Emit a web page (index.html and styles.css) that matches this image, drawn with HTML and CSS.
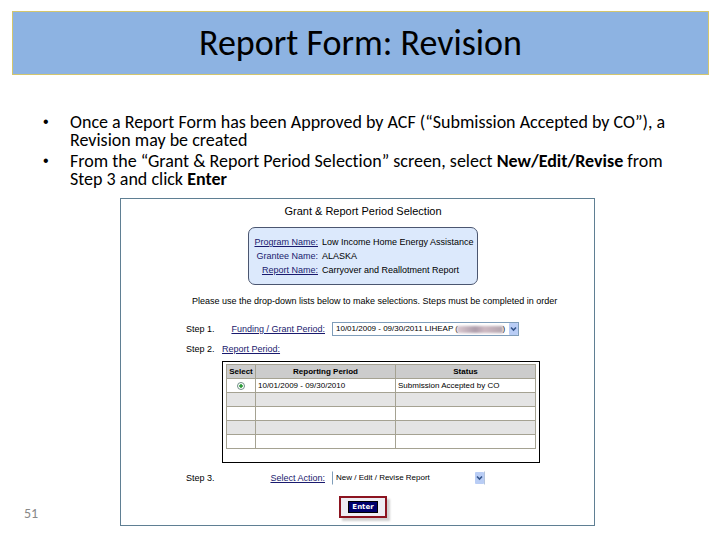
FILE: index.html
```
<!DOCTYPE html>
<html lang="en">
<head>
  <meta charset="utf-8">
  <title>Report Form: Revision</title>
  <link rel="stylesheet" href="styles.css">
</head>
<body>
  <header class="banner">
    <h1>Report Form: Revision</h1>
  </header>

  <ul class="points">
    <li>Once a Report Form has been Approved by ACF (“Submission Accepted by CO”), a Revision may be created</li>
    <li>From the “Grant &amp; Report Period Selection” screen, select <b>New/Edit/Revise</b> from Step 3 and click <b>Enter</b></li>
  </ul>

  <main class="content">
    <span class="slide-number">51</span>

    <form class="screen">
      <h2>Grant &amp; Report Period Selection</h2>

      <dl class="info">
        <dt><a href="#">Program Name:</a></dt>
        <dd>Low Income Home Energy Assistance</dd>
        <dt><a href="#" class="plain">Grantee Name:</a></dt>
        <dd>ALASKA</dd>
        <dt><a href="#">Report Name:</a></dt>
        <dd>Carryover and Reallotment Report</dd>
      </dl>

      <p class="hint">Please use the drop-down lists below to make selections. Steps must be completed in order</p>

      <div class="step">
        <span>Step 1.</span>
        <label for="grant"><a href="#">Funding / Grant Period:</a></label>
        <div class="select grant">
          <select id="grant">
            <option>10/01/2009 - 09/30/2011 LIHEAP ( &nbsp; &nbsp; &nbsp; &nbsp; &nbsp; &nbsp; &nbsp; &nbsp; &nbsp; &nbsp;)</option>
          </select>
          <span class="redacted"></span>
          <svg class="arrow" viewBox="0 0 9 12"><rect width="9" height="12" rx="1" fill="#b9cdf5"/><path d="M2 4.5 4.5 7 7 4.5" fill="none" stroke="#34558b" stroke-width="1.6"/></svg>
        </div>
      </div>

      <div class="step">
        <span>Step 2.</span>
        <a href="#">Report Period:</a>
      </div>

      <div class="table-box">
        <table>
          <thead>
            <tr><th class="col-select">Select</th><th>Reporting Period</th><th>Status</th></tr>
          </thead>
          <tbody>
            <tr>
              <td class="col-select"><input type="radio" name="period" aria-label="10/01/2009 - 09/30/2010" checked></td>
              <td>10/01/2009 - 09/30/2010</td>
              <td>Submission Accepted by CO</td>
            </tr>
            <tr><td></td><td></td><td></td></tr>
            <tr><td></td><td></td><td></td></tr>
            <tr><td></td><td></td><td></td></tr>
            <tr><td></td><td></td><td></td></tr>
          </tbody>
        </table>
      </div>

      <div class="step">
        <span>Step 3.</span>
        <label for="action"><a href="#">Select Action:</a></label>
        <div class="select action">
          <select id="action">
            <option>New / Edit / Revise Report</option>
          </select>
          <svg class="arrow" viewBox="0 0 9 12"><rect width="9" height="12" rx="1" fill="#b9cdf5"/><path d="M2 4.5 4.5 7 7 4.5" fill="none" stroke="#34558b" stroke-width="1.6"/></svg>
        </div>
      </div>

      <div class="highlight">
        <button type="button">Enter</button>
      </div>
    </form>
  </main>
</body>
</html>
```
FILE: styles.css
```
* {
  margin: 0;
  padding: 0;
  box-sizing: border-box;
}

body {
  font-family: Carlito, Calibri, Lato, sans-serif;
  font-variant-ligatures: none;
  background: #fff;
  color: #000;
}

.banner {
  margin: 11px 11px 0 12px;
  height: 64px;
  display: flex;
  align-items: center;
  justify-content: center;
  background: #8db3e2;
  border: 1px solid #d3c66e;
}

.banner h1 {
  font-size: 36px;
  font-weight: normal;
}

.points {
  margin: 38px 48px 0 70px;
  font-size: 18px;
  line-height: 18px;
  list-style: none;
}

.points li {
  position: relative;
  margin-bottom: 3px;
}

.points li::before {
  content: "•";
  position: absolute;
  left: -27px;
  font-family: "Liberation Sans", Arial, sans-serif;
  font-size: 16px;
}

.content {
  display: grid;
  grid-template-columns: 120px minmax(0, 1fr) 125px;
  margin-top: 10px;
}

.slide-number {
  align-self: end;
  padding: 0 0 3px 24px;
  font-size: 14px;
  line-height: 18px;
  color: #898989;
}

.screen {
  padding: 5px 54px 7px 65px;
  border: 1px solid #5f7f93;
  font-family: "Liberation Sans", Arial, sans-serif;
  font-size: 9px;
  line-height: 14px;
}

.screen h2 {
  font-size: 11px;
  font-weight: normal;
  text-align: center;
}

.screen a {
  color: #1a1a6e;
}

.screen a.plain {
  text-decoration: none;
}

.info {
  width: 230px;
  margin: 9px auto 0;
  padding: 7px 0;
  display: grid;
  grid-template-columns: 69px 1fr;
  column-gap: 4px;
  background: #dce9fc;
  border: 1px solid #4b5670;
  border-radius: 7px;
  white-space: nowrap;
}

.info dt {
  text-align: right;
}

.hint {
  margin: 9px 0 14px 6px;
  white-space: nowrap;
}

.step {
  display: flex;
  align-items: center;
  height: 14px;
}

.step > span {
  width: 36px;
}

.step label {
  width: 103px;
  text-align: right;
}

.select {
  position: relative;
  margin-left: 7px;
  height: 14px;
}

.grant {
  width: 187px;
}

.action {
  width: 153px;
}

.select select {
  display: block;
  width: 100%;
  height: 14px;
  padding-left: 3px;
  appearance: none;
  background: #fff;
  border: 1px solid #7f9db9;
  border-radius: 0;
  font-family: inherit;
  font-size: 8px;
  line-height: 12px;
  color: #000;
}

.action select {
  border-color: #fff #b4c4dc #fff #7f9db9;
}

.arrow {
  position: absolute;
  top: 1px;
  right: 1px;
  width: 9px;
  height: 12px;
}

.redacted {
  position: absolute;
  top: 4px;
  right: 16px;
  width: 46px;
  height: 7px;
  background: linear-gradient(90deg, #dccad1, #ad9dab 40%, #cdb9c2 60%, #b3a5af);
  filter: blur(1px);
}

.step + .step {
  margin-top: 6px;
}

.table-box {
  margin: 5px 0 8px 36px;
  padding: 2px 3px 13px;
  border: 1px solid #000;
}

table {
  width: 100%;
  table-layout: fixed;
  border-collapse: collapse;
  font-size: 8px;
}

th,
td {
  height: 14px;
  padding: 0 2px;
  border: 1px solid #a5a292;
  line-height: 13px;
  white-space: nowrap;
}

th {
  background: #ccc;
}

.col-select {
  width: 29px;
  padding: 0;
  text-align: center;
}

tbody tr:nth-child(even) {
  background: #e4e4e4;
}

input[type="radio"] {
  display: block;
  width: 8px;
  height: 8px;
  margin: 0 auto;
  appearance: none;
  border: 1px solid #6f8e86;
  border-radius: 50%;
  background: radial-gradient(#2c9a3a 35%, #fff 45%);
}

.highlight {
  width: 48px;
  height: 22px;
  margin: 11px auto 0;
  display: flex;
  align-items: center;
  justify-content: center;
  border: 2px solid #8c1420;
  background: #eeeef4;
  box-shadow: 3px 3px 2px #d0d0d0;
}

.highlight button {
  width: 30px;
  height: 12px;
  background: #00006b;
  border: 1px solid #000;
  color: #fff;
  font: bold 7px/10px "DejaVu Sans", sans-serif;
}
```
